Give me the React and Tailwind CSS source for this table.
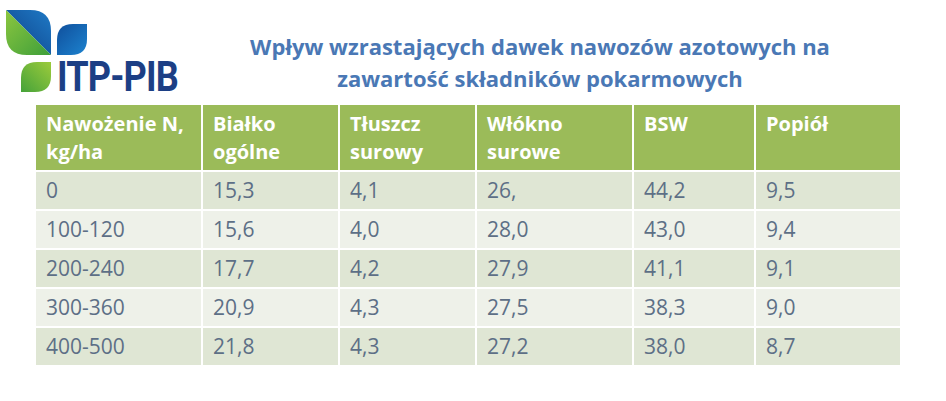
const headers = [
  ["Nawożenie N,", "kg/ha"],
  ["Białko", "ogólne"],
  ["Tłuszcz", "surowy"],
  ["Włókno", "surowe"],
  ["BSW"],
  ["Popiół"],
];

const rows = [
  ["0", "15,3", "4,1", "26,", "44,2", "9,5"],
  ["100-120", "15,6", "4,0", "28,0", "43,0", "9,4"],
  ["200-240", "17,7", "4,2", "27,9", "41,1", "9,1"],
  ["300-360", "20,9", "4,3", "27,5", "38,3", "9,0"],
  ["400-500", "21,8", "4,3", "27,2", "38,0", "8,7"],
];

const Logo = () => (
  <div className="relative w-[180px] h-[100px] shrink-0">
    <svg width="95" height="95" viewBox="0 0 95 95" className="block">
      <defs>
        <linearGradient id="blueBig" x1="1" y1="0" x2="0" y2="1">
          <stop offset="0" stopColor="#1f7ac6" />
          <stop offset="1" stopColor="#0d3f86" />
        </linearGradient>
        <linearGradient id="greenBig" x1="0" y1="0" x2="1" y2="1">
          <stop offset="0" stopColor="#8cc63f" />
          <stop offset="1" stopColor="#3e9f3a" />
        </linearGradient>
        <linearGradient id="blueSmall" x1="0" y1="0" x2="1" y2="1">
          <stop offset="0" stopColor="#0f4f9c" />
          <stop offset="1" stopColor="#1d83cf" />
        </linearGradient>
        <linearGradient id="greenSmall" x1="1" y1="0" x2="0" y2="1">
          <stop offset="0" stopColor="#9ccb3b" />
          <stop offset="1" stopColor="#45a23a" />
        </linearGradient>
      </defs>
      <path d="M6 10 L30 10 Q51 10 51 31 L51 55 Z" fill="url(#blueBig)" />
      <path d="M6 10 L6 34 Q6 55 27 55 L51 55 Z" fill="url(#greenBig)" />
      <path d="M57 55 L57 40 Q57 24 73 24 L87 24 L87 39 Q87 55 71 55 Z" fill="url(#blueSmall)" />
      <path d="M21 92 L21 78 Q21 62 37 62 L51 62 L51 76 Q51 92 35 92 Z" fill="url(#greenSmall)" />
    </svg>
    <span
      className="absolute left-[57px] top-[49px] text-[42px] leading-[56px] font-bold text-[#1c3f85] tracking-[-1px] scale-x-[0.86] origin-left whitespace-nowrap"
      style={{ fontFamily: "Roboto, 'Liberation Sans', sans-serif" }}
    >
      ITP-PIB
    </span>
  </div>
);

export default function App() {
  return (
    <div className="w-[946px] h-[401px] bg-white overflow-hidden" style={{ fontFamily: "'Open Sans', 'Liberation Sans', sans-serif" }}>
      <div className="flex h-[105px]">
        <Logo />
        <div className="flex-1 pr-[46px] pt-[30px] text-center text-[22px] leading-[32px] font-bold text-[#4a78b5]">
          <div>Wpływ wzrastających dawek nawozów azotowych na</div>
          <div>zawartość składników pokarmowych</div>
        </div>
      </div>

      <div className="ml-[36px] w-[864px] grid grid-cols-[165px_135px_135px_155px_120px_144px] gap-[2px] bg-white">
        {headers.map((h, i) => (
          <div key={i} className="h-[65px] bg-[#9bbb59] pl-[10px] pt-[5px] text-[20px] leading-[28px] font-bold text-white">
            {h.map((line, j) => (
              <div key={j}>{line}</div>
            ))}
          </div>
        ))}
        {rows.map((row, r) =>
          row.map((cell, c) => (
            <div
              key={r + "-" + c}
              className={
                "h-[37px] flex items-center pl-[10px] text-[21px] text-[#5d6f86] " +
                (r % 2 === 0 ? "bg-[#dfe6d4]" : "bg-[#eef1e9]")
              }
            >
              {cell}
            </div>
          ))
        )}
      </div>
    </div>
  );
}
